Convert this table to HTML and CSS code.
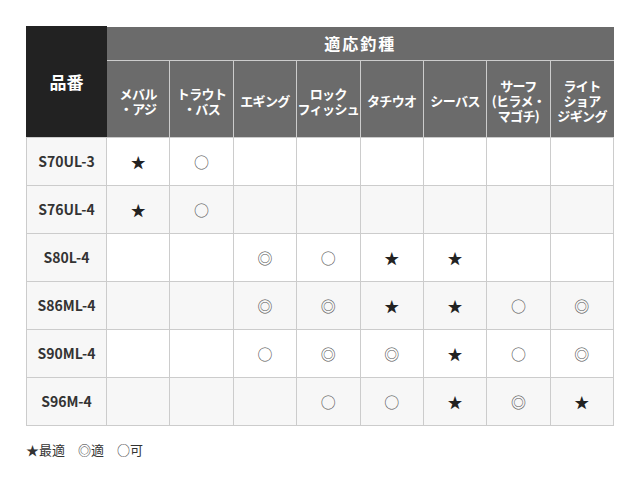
FILE: index.html
```html
<!DOCTYPE html>
<html lang="ja">
<head>
<meta charset="utf-8">
<link rel="stylesheet" href="styles.css">
</head>
<body>
<div class="wrap">
<table class="chart">
  <colgroup>
    <col class="c-model">
    <col span="8" class="c-fish">
  </colgroup>
  <thead>
    <tr class="h1">
      <th rowspan="2" class="model-head">品番</th>
      <th colspan="8" class="group-head">適応釣種</th>
    </tr>
    <tr class="h2">
      <th>メバル<br>・アジ</th>
      <th>トラウト<br>・バス</th>
      <th>エギング</th>
      <th>ロック<br>フィッシュ</th>
      <th>タチウオ</th>
      <th>シーバス</th>
      <th>サーフ<br>(ヒラメ・<br>マゴチ)</th>
      <th>ライト<br>ショア<br>ジギング</th>
    </tr>
  </thead>
  <tbody>
    <tr class="odd">
      <th>S70UL-3</th>
      <td class="star">★</td><td class="ring">○</td><td></td><td></td><td></td><td></td><td></td><td></td>
    </tr>
    <tr class="even">
      <th>S76UL-4</th>
      <td class="star">★</td><td class="ring">○</td><td></td><td></td><td></td><td></td><td></td><td></td>
    </tr>
    <tr class="odd">
      <th>S80L-4</th>
      <td></td><td></td><td class="ring">◎</td><td class="ring">○</td><td class="star">★</td><td class="star">★</td><td></td><td></td>
    </tr>
    <tr class="even">
      <th>S86ML-4</th>
      <td></td><td></td><td class="ring">◎</td><td class="ring">◎</td><td class="star">★</td><td class="star">★</td><td class="ring">○</td><td class="ring">◎</td>
    </tr>
    <tr class="odd">
      <th>S90ML-4</th>
      <td></td><td></td><td class="ring">○</td><td class="ring">◎</td><td class="ring">◎</td><td class="star">★</td><td class="ring">○</td><td class="ring">◎</td>
    </tr>
    <tr class="even">
      <th>S96M-4</th>
      <td></td><td></td><td></td><td class="ring">○</td><td class="ring">○</td><td class="star">★</td><td class="ring">◎</td><td class="star">★</td>
    </tr>
  </tbody>
</table>
<p class="legend">★最適　◎適　○可</p>
</div>
</body>
</html>
```
FILE: styles.css
```css
html, body {
  margin: 0;
  padding: 0;
  background: #fff;
}
body {
  font-family: "Noto Sans CJK JP", "Noto Sans", sans-serif;
  color: #333;
}
.wrap {
  padding: 26px 26px 0 26px;
}
.chart {
  width: 588px;
  border-collapse: collapse;
  table-layout: fixed;
}
.c-model { width: 80px; }
.chart th, .chart td {
  padding: 0;
  text-align: center;
  vertical-align: middle;
}
.h1 th, .h2 th {
  color: #fff;
  font-weight: bold;
}
.model-head {
  background: #222;
  font-size: 17px;
  border: 1px solid #222;
  border-bottom: 1px solid #ccc;
}
.group-head {
  background: #6b6b6b;
  height: 33px;
  font-size: 16px;
  letter-spacing: 2px;
  border-bottom: 1px solid #ccc;
}
.h2 th {
  background: #6b6b6b;
  height: 72px;
  font-size: 13px;
  line-height: 15px;
  letter-spacing: -0.6px;
  white-space: nowrap;
  border-left: 1px solid #ccc;
  border-bottom: 1px solid #ccc;
  padding-top: 4px;
}
tbody th {
  background: #f7f7f7;
  font-size: 14px;
  font-weight: bold;
  color: #333;
  height: 47px;
  border: 1px solid #ccc;
}
tbody td {
  border: 1px solid #ccc;
  height: 47px;
  font-size: 15px;
}
tbody tr.even td { background: #f7f7f7; }
tbody tr.odd td { background: #fff; }
.star { color: #222; }
.ring { color: #555; }
.legend {
  margin: 14px 0 0 0;
  font-size: 13px;
  color: #333;
}
```
